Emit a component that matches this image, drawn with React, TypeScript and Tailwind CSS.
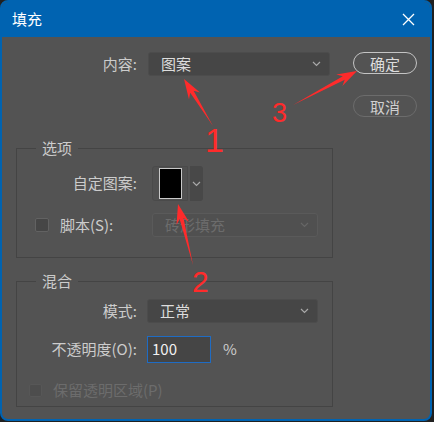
import type { ReactNode } from "react";

function Chevron({ className }: { className?: string }) {
  return (
    <svg width="9" height="6" viewBox="0 0 9 6" className={className}>
      <path d="M1 1l3.5 3.5L8 1" fill="none" stroke="currentColor" strokeWidth="1.2" />
    </svg>
  );
}

function Select({ value, className, disabled }: { value: string; className: string; disabled?: boolean }) {
  return (
    <div
      className={
        disabled
          ? `flex h-[24px] items-center justify-between rounded-[3px] border border-[#5a5a5a] bg-[#505050] pl-[12px] pr-[8px] text-[15px] text-[#6c6c6c] ${className}`
          : `flex h-[24px] items-center justify-between rounded-[3px] border border-[#4c4c4c] bg-[#464646] pl-[12px] pr-[8px] text-[15px] text-[#dddddd] ${className}`
      }
    >
      <span>{value}</span>
      <Chevron className={disabled ? "text-[#666666]" : "text-[#a8a8a8]"} />
    </div>
  );
}

function Label({ children }: { children: ReactNode }) {
  return <div className="w-[120px] text-right text-[15px] text-[#cccccc]">{children}</div>;
}

// tapered annotation arrow, drawn as one polygon
function arrow(x1: number, y1: number, x2: number, y2: number, head = 20, hw = 6.5, sw = 2) {
  const len = Math.hypot(x2 - x1, y2 - y1);
  const ux = (x2 - x1) / len;
  const uy = (y2 - y1) / len;
  const nx = -uy;
  const ny = ux;
  const at = (d: number, o: number) => [x2 - ux * d + nx * o, y2 - uy * d + ny * o];
  const pts = [[x1, y1], at(head * 0.75, sw), at(head, hw), [x2, y2], at(head, -hw), at(head * 0.75, -sw)];
  return pts.map((p) => p.map((n) => n.toFixed(1)).join(",")).join(" ");
}

export default function App() {
  return (
    <div className="relative h-[422px] w-[434px] bg-[#202020] font-['Noto_Sans_CJK_SC','Liberation_Sans',sans-serif]">
      <div className="flex h-[421px] w-[432px] flex-col overflow-hidden rounded-[8px] border-2 border-[#0063b1] bg-[#535353]">
        <div className="flex h-[35px] shrink-0 items-center justify-between bg-[#0063b1] pl-[10px] pr-[15px]">
          <span className="text-[15px] text-white">填充</span>
          <svg width="13" height="13" viewBox="0 0 13 13">
            <path d="M1 1l11 11M12 1L1 12" stroke="#ffffff" strokeWidth="1.3" />
          </svg>
        </div>

        <div className="flex pl-[14px] pt-[15px]">
          <div className="w-[317px]">
            <div className="flex h-[24px] items-center">
              <div className="w-[121px] text-right text-[15px] text-[#cccccc]">内容:</div>
              <Select value="图案" className="ml-[11px] w-[182px]" />
            </div>

            <fieldset className="mt-[62px] h-[120px] border border-[#444444]">
              <legend className="ml-[19px] h-[20px] px-[6px] text-[15px] leading-[20px] text-[#cccccc]">选项</legend>
              <div className="mt-[8px] flex h-[35px] items-center">
                <Label>自定图案:</Label>
                <div className="ml-[15px] flex h-[35px]">
                  <div className="flex w-[36px] items-center justify-center rounded-l-[3px] border border-[#4a4a4a] bg-[#505050]">
                    <div className="h-[31px] w-[23px] border border-[#c8c8c8] bg-black" />
                  </div>
                  <div className="ml-[2px] flex w-[13px] items-center justify-center rounded-r-[3px] bg-[#484848]">
                    <Chevron className="text-[#a8a8a8]" />
                  </div>
                </div>
              </div>
              <div className="mt-[12px] flex h-[24px] items-center">
                <div className="flex w-[120px] items-center pl-[18px]">
                  <div className="h-[14px] w-[14px] rounded-[2px] border border-[#626262] bg-[#464646]" />
                  <span className="ml-[11px] text-[15px] text-[#cccccc]">脚本(S):</span>
                </div>
                <Select value="砖形填充" className="ml-[15px] w-[166px]" disabled />
              </div>
            </fieldset>

            <fieldset className="mt-[13px] h-[136px] border border-[#444444]">
              <legend className="ml-[19px] h-[20px] px-[6px] text-[15px] leading-[20px] text-[#cccccc]">混合</legend>
              <div className="mt-[8px] flex h-[24px] items-center">
                <Label>模式:</Label>
                <Select value="正常" className="ml-[10px] w-[171px]" />
              </div>
              <div className="mt-[13px] flex h-[27px] items-center">
                <Label>不透明度(O):</Label>
                <div className="ml-[10px] flex h-[27px] w-[64px] items-center border border-[#1f6cc4] bg-[#454545] pl-[4px] text-[15px] text-[#f2f2f2]">
                  100
                </div>
                <span className="ml-[12px] text-[15px] text-[#cccccc]">%</span>
              </div>
              <div className="mt-[16px] flex items-center pl-[12px]">
                <div className="h-[13px] w-[13px] rounded-[2px] border border-[#575757] bg-[#4d4d4d]" />
                <span className="ml-[11px] text-[15px] text-[#6c6c6c]">保留透明区域(P)</span>
              </div>
            </fieldset>
          </div>

          <div className="ml-[20px] flex w-[64px] flex-col">
            <button className="h-[22px] rounded-full border-[1.5px] border-[#c4c4c4] text-[15px] leading-none text-[#dddddd]">
              确定
            </button>
            <button className="mt-[21px] h-[22px] rounded-full border border-[#6c6c6c] text-[15px] leading-none text-[#d0d0d0]">
              取消
            </button>
          </div>
        </div>
      </div>

      {/* red annotations */}
      <svg className="pointer-events-none absolute left-0 top-0" width="434" height="422" viewBox="0 0 434 422">
        <polygon points={arrow(213, 126, 184, 79)} fill="#ff2b2b" />
        <polygon points={arrow(293, 105, 357, 71)} fill="#ff2b2b" />
        <polygon points={arrow(193, 265, 178, 204)} fill="#ff2b2b" />
        <text x="205" y="152" fill="#ff2b2b" fontSize="34" fontFamily="Liberation Sans, sans-serif">1</text>
        <text x="192" y="292" fill="#ff2b2b" fontSize="30" fontFamily="Liberation Sans, sans-serif">2</text>
        <text x="272" y="122" fill="#ff2b2b" fontSize="27" fontFamily="Liberation Sans, sans-serif">3</text>
      </svg>
    </div>
  );
}
